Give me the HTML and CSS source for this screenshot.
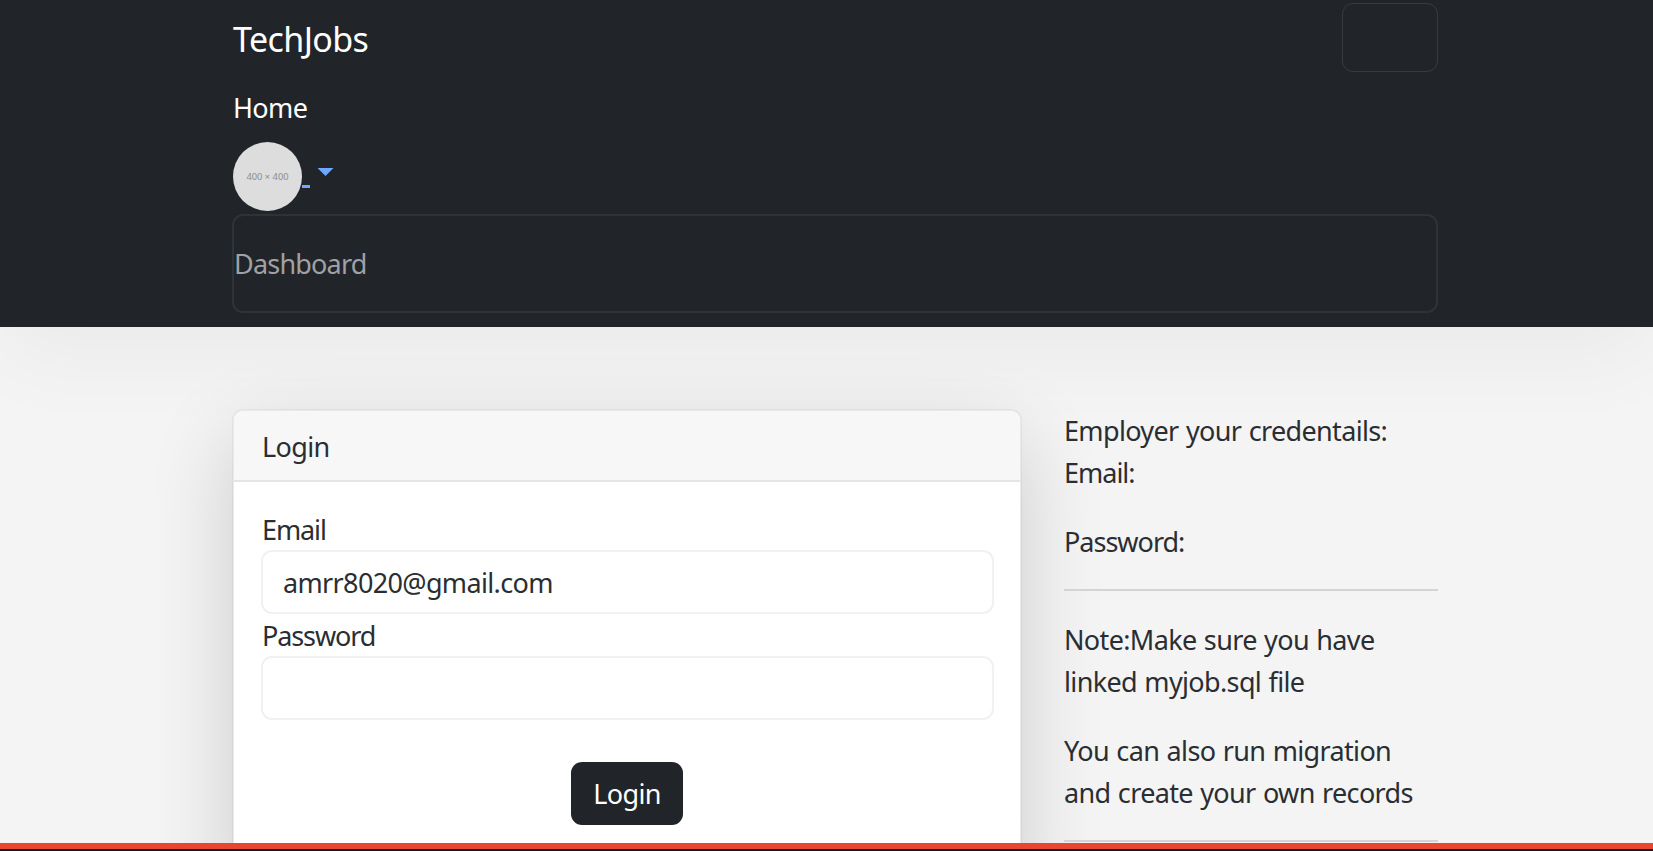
FILE: index.html
```html
<!DOCTYPE html>
<html lang="en">
<head>
<meta charset="utf-8">
<title>TechJobs</title>
<link rel="stylesheet" href="styles.css">
</head>
<body>
<div class="viewport">
  <nav class="navbar">
    <div class="container">
      <div class="nav-top">
        <a class="brand"><span>TechJobs</span></a>
        <button class="toggler" aria-label="Menu"></button>
      </div>
      <a class="nav-home"><span>Home</span></a>
      <div class="profile">
        <svg class="avatar" viewBox="0 0 69 69" role="img" aria-label="Avatar">
          <circle cx="34.5" cy="34.5" r="34.5" fill="#dddddd"/>
          <text x="34.5" y="37.8" text-anchor="middle" textLength="42" lengthAdjust="spacingAndGlyphs" class="avatar-text">400 × 400</text>
        </svg>
        <span class="link-gap"></span>
        <span class="caret"></span>
      </div>
      <div class="dropdown"><a class="dropdown-item"><span>Dashboard</span></a></div>
    </div>
  </nav>
  <main class="container main">
    <section class="card">
      <header class="card-header"><span>Login</span></header>
      <form class="card-body">
        <label>Email</label>
        <div class="input"><span>amrr8020@gmail.com</span></div>
        <label>Password</label>
        <div class="input"></div>
        <button class="submit" type="button">Login</button>
      </form>
    </section>
    <aside class="notes">
      <div class="loose">Employer your credentails:</div>
      <p class="tight">Email:</p>
      <p class="tight">Password:</p>
      <hr>
      <p class="loose">Note:Make sure you have<br>linked myjob.sql file</p>
      <p class="loose">You can also run migration<br>and create your own records</p>
      <hr>
    </aside>
  </main>
</div>
<footer class="bottom-bar"></footer>
</body>
</html>
```
FILE: styles.css
```css
* { box-sizing: border-box; }
body {
  margin: 0;
  height: 851px;
  display: flex;
  flex-direction: column;
  overflow: hidden;
  background: #f4f4f4;
  color: #2a2e32;
  font: 27px/42px "Noto Sans", "Open Sans", sans-serif;
  letter-spacing: -0.65px;
  white-space: nowrap;
}
.viewport { height: 843px; overflow: hidden; }
.container { width: 1205px; margin-left: 233px; }
.navbar {
  height: 327px;
  background: #212529;
  box-shadow: 0 28px 84px rgba(0, 0, 0, .045);
}
.nav-top {
  display: flex;
  justify-content: space-between;
  height: 75px;
  padding-top: 3px;
}
.brand {
  padding-top: 1px;
  color: #fff;
  font-size: 34px;
  line-height: 70px;
  letter-spacing: -0.6px;
}
.toggler {
  width: 96px;
  height: 69px;
  border: 1.5px solid #373b3f;
  border-radius: 11px;
  background: transparent;
}
.nav-home { display: block; height: 67px; padding-top: 12px; color: #fff; }
.profile { display: flex; height: 72px; margin-left: -0.5px; }
.avatar { width: 69px; height: 69px; }
.avatar-text { font: 9px "Noto Sans", sans-serif; letter-spacing: 0; fill: #8c8c8c; }
.link-gap { width: 8px; height: 3px; margin: 43px 0 0; background: #6ea8fe; }
.caret {
  width: 16px;
  height: 8px;
  margin: 26px 0 0 8px;
  background: #6ea8fe;
  clip-path: polygon(0 0, 100% 0, 50% 100%);
}
.dropdown {
  width: 1206px;
  height: 99px;
  margin-left: -1px;
  padding: 27px 0 0;
  border: 2px solid #2f3337;
  border-radius: 11px;
}
.dropdown-item { color: #a0a1a3; letter-spacing: -0.8px; }
.main {
  display: grid;
  grid-template-columns: 790px 374px;
  justify-content: space-between;
  align-items: start;
  margin-left: 232px;
  width: 1206px;
  padding-top: 82px;
}
.card {
  height: 480px;
  border: 2px solid rgba(0, 0, 0, .04);
  border-radius: 11px;
  background: #fff;
  background-clip: padding-box;
  box-shadow: 0 28px 84px rgba(0, 0, 0, .16);
}
.card-header {
  height: 71px;
  padding: 15px 28px 0;
  border-bottom: 2px solid #e4e5e5;
  border-radius: 10px 10px 0 0;
  background: #f7f7f7;
}
.card-body {
  display: flex;
  flex-direction: column;
  padding: 26px 26px 0 27px;
}
.card-body label { height: 42px; padding: 1px 0 0 1px; letter-spacing: -1.1px; }
.tight { letter-spacing: -1px; }
.loose { letter-spacing: -0.65px; word-spacing: 1px; }
.input {
  height: 64px;
  padding: 10px 20px;
  border: 2px solid #f0f1f1;
  border-radius: 11px;
}
.submit {
  align-self: center;
  width: 112px;
  height: 63px;
  margin: 42px 1px 0 0;
  padding: 0;
  border: 0;
  border-radius: 11px;
  background: #212529;
  color: #fff;
  font: inherit;
  letter-spacing: -0.6px;
}
.notes { padding-top: 1px; line-height: 41.75px; }
.notes p { margin: 0 0 27.5px; }
.notes hr { height: 2px; margin: -1px 0 28px; border: 0; background: #d3d4d4; }
.bottom-bar { height: 8px; border-top: 6px solid #e84632; background: #1b1520; }
```
